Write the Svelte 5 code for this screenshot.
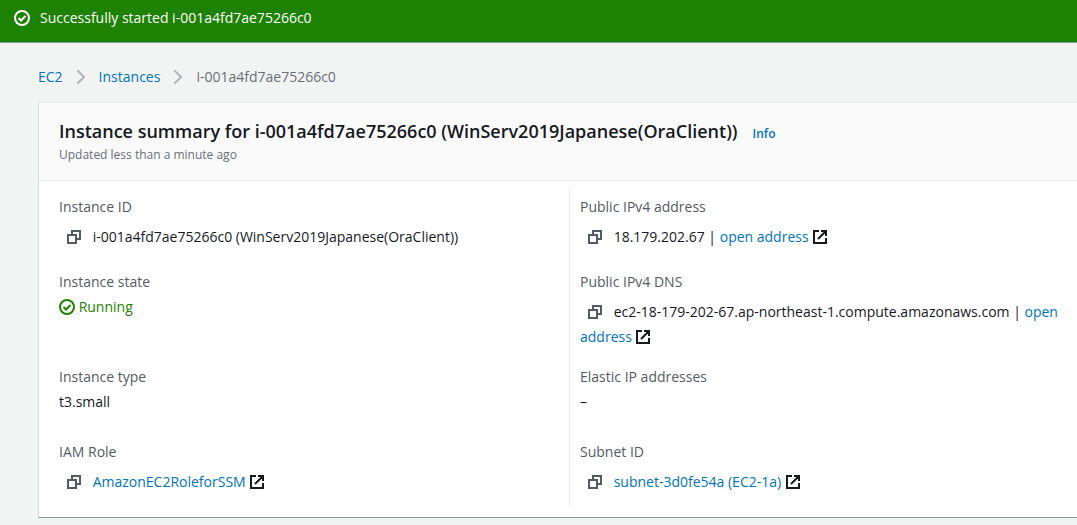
<script lang="ts">
  interface Field {
    label: string;
    value?: string;
    link?: string;
    copy?: boolean;
    status?: boolean;
  }

  const instanceId = 'i-001a4fd7ae75266c0';
  const instanceName = 'WinServ2019Japanese(OraClient)';

  // Read row by row: left column, right column.
  const fields: Field[] = [
    { label: 'Instance ID', value: `${instanceId} (${instanceName})`, copy: true },
    { label: 'Public IPv4 address', value: '18.179.202.67', link: 'open address', copy: true },
    { label: 'Instance state', value: 'Running', status: true },
    {
      label: 'Public IPv4 DNS',
      value: 'ec2-18-179-202-67.ap-northeast-1.compute.amazonaws.com',
      link: 'open address',
      copy: true,
    },
    { label: 'Instance type', value: 't3.small' },
    { label: 'Elastic IP addresses', value: '–' },
    { label: 'IAM Role', link: 'AmazonEC2RoleforSSM', copy: true },
    { label: 'Subnet ID', link: 'subnet-3d0fe54a (EC2-1a)', copy: true },
  ];

  function copyText(f: Field) {
    navigator.clipboard?.writeText(f.value ?? f.link ?? '');
  }
</script>

{#snippet checkIcon()}
  <svg class="icon" viewBox="0 0 16 16" aria-hidden="true">
    <circle cx="8" cy="8" r="7" />
    <path d="M4.5 8l2.5 2.5 4.5-4.5" />
  </svg>
{/snippet}

{#snippet chevron()}
  <svg class="chevron" viewBox="0 0 10 16" aria-hidden="true">
    <path d="M1.5 1.5L8 8l-6.5 6.5" />
  </svg>
{/snippet}

<div class="flash" role="status">
  {@render checkIcon()}
  <span>Successfully started {instanceId}</span>
</div>

<main>
  <nav class="breadcrumbs" aria-label="Breadcrumbs">
    <a href="#ec2">EC2</a>
    {@render chevron()}
    <a href="#instances">Instances</a>
    {@render chevron()}
    <span>{instanceId}</span>
  </nav>

  <section class="card">
    <header>
      <div class="title">
        <h1>Instance summary for {instanceId} ({instanceName})</h1>
        <a href="#info">Info</a>
      </div>
      <p>Updated less than a minute ago</p>
    </header>

    <dl>
      {#each fields as f (f.label)}
        <div class="field">
          <dt>{f.label}</dt>
          <dd class:copyable={f.copy} class:running={f.status}>
            {#if f.copy}
              <button type="button" aria-label="Copy {f.label}" onclick={() => copyText(f)}>
                <svg class="icon" viewBox="0 0 16 16" aria-hidden="true">
                  <path d="M2 6h8v8H2zM6 5V2h8v8h-3" />
                </svg>
              </button>
            {/if}
            {#if f.status}{@render checkIcon()}{/if}
            {f.value}
            {#if f.link}
              {#if f.value}|{/if}
              <a href="#{f.label}">{f.link}</a>
              <svg class="icon external" viewBox="0 0 16 16" aria-hidden="true">
                <path d="M7 2H2v12h12V9M9 2h5v5M14 2L6 10" />
              </svg>
            {/if}
          </dd>
        </div>
      {/each}
    </dl>
  </section>
</main>

<style>
  :global(body) {
    margin: 0;
    background: #f2f3f3;
    color: #16191f;
    font: 14px/25px "Open Sans", "Noto Sans", sans-serif;
  }
  a {
    color: #0073bb;
    text-decoration: none;
  }
  a:hover { text-decoration: underline; }

  .icon {
    width: 16px;
    height: 16px;
    fill: none;
    stroke: currentColor;
    stroke-width: 2;
    vertical-align: -3px;
  }

  .flash {
    display: flex;
    align-items: center;
    gap: 10px;
    padding: 5px 14px 12px;
    background: #1d8102;
    border-bottom: 1px solid #879596;
    color: #fff;
    font-weight: 500;
  }

  main { padding: 21px 0 7px 38px; }

  .breadcrumbs {
    display: flex;
    align-items: center;
    gap: 13px;
    color: #687078;
  }
  .chevron {
    width: 10px;
    height: 16px;
    fill: none;
    stroke: #aab7b8;
    stroke-width: 2;
  }

  .card {
    margin-top: 13px;
    background: #fff;
    border: 1px solid #d5dbdb;
    border-top-color: #eaeded;
    border-right: 0;
    border-bottom-color: #879596;
  }
  header {
    padding: 16px 20px;
    background: #fafafa;
    border-bottom: 1px solid #eaeded;
  }
  .title {
    display: flex;
    align-items: baseline;
    gap: 15px;
    line-height: 24px;
  }
  h1 {
    margin: 0;
    font-size: 18px;
    font-weight: 600;
  }
  .title a {
    font-size: 12px;
    font-weight: 600;
  }
  header p {
    margin: 0;
    color: #687078;
    font-size: 12px;
    line-height: 18px;
  }

  dl {
    display: grid;
    grid-template-columns: 1fr 1fr;
    column-gap: 2px;
    margin: 0;
    padding: 6px 0 10px 20px;
  }
  .field { padding-top: 15px; }
  .field:nth-child(-n + 2) { padding-top: 7px; }
  .field:nth-last-child(-n + 2) { padding-bottom: 8px; }
  .field:nth-child(even) {
    padding-left: 10px;
    border-left: 1px solid #eaeded;
  }
  dt { color: #545b64; }
  dd {
    min-height: 35px;
    margin: 0;
  }
  .copyable { padding-top: 5px; min-height: 30px; }
  .running { color: #1d8102; }

  button {
    display: inline-flex;
    margin: 0;
    padding: 0 7px;
    border: 0;
    background: none;
    color: #545b64;
    vertical-align: -3px;
    cursor: pointer;
  }
  .external { color: #16191f; }
</style>
